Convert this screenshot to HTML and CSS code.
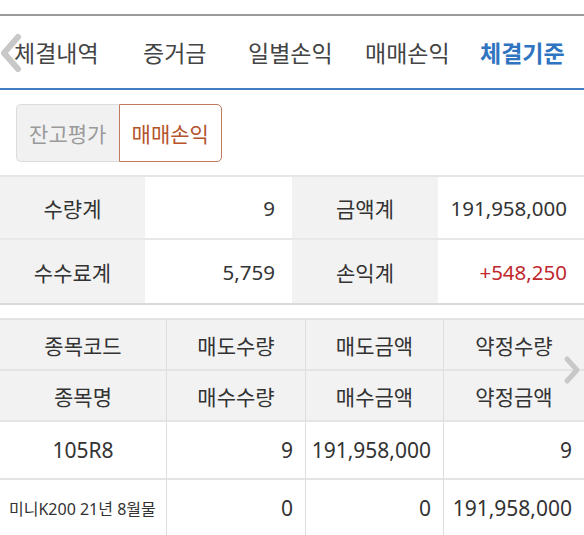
FILE: index.html
```html
<!DOCTYPE html>
<html lang="ko">
<head>
<meta charset="utf-8">
<link rel="stylesheet" href="styles.css">
</head>
<body>
<div class="page">
  <div class="top-space"></div>
  <nav class="tabs">
    <svg class="chev-left" width="24" height="40" viewBox="0 0 24 40"><polyline points="19,4 5,20 19,36" fill="none" stroke="#c8c8c8" stroke-width="6" stroke-linecap="round" stroke-linejoin="round"/></svg>
    <div class="tab t1">체결내역</div>
    <div class="tab t2">증거금</div>
    <div class="tab t3">일별손익</div>
    <div class="tab t4">매매손익</div>
    <div class="tab t5 active">체결기준</div>
  </nav>
  <div class="seg">
    <div class="seg-btn off">잔고평가</div>
    <div class="seg-btn on">매매손익</div>
  </div>
  <div class="summary">
    <div class="s-label">수량계</div>
    <div class="s-val">9</div>
    <div class="s-label">금액계</div>
    <div class="s-val">191,958,000</div>
    <div class="s-label">수수료계</div>
    <div class="s-val">5,759</div>
    <div class="s-label">손익계</div>
    <div class="s-val red">+548,250</div>
  </div>
  <div class="grid-wrap">
    <div class="grid">
      <div class="h">종목코드</div>
      <div class="h">매도수량</div>
      <div class="h">매도금액</div>
      <div class="h">약정수량</div>
      <div class="h">종목명</div>
      <div class="h">매수수량</div>
      <div class="h">매수금액</div>
      <div class="h">약정금액</div>
      <div class="d c">105R8</div>
      <div class="d">9</div>
      <div class="d">191,958,000</div>
      <div class="d">9</div>
      <div class="d name">미니K200 21년 8월물</div>
      <div class="d">0</div>
      <div class="d">0</div>
      <div class="d">191,958,000</div>
    </div>
    <svg class="chev-right" width="20" height="30" viewBox="0 0 20 30"><polyline points="5,4 15,15 5,26" fill="none" stroke="#c8c8c8" stroke-width="5" stroke-linecap="round" stroke-linejoin="round"/></svg>
  </div>
</div>
</body>
</html>
```

FILE: styles.css
```css
* { box-sizing: border-box; }
html, body { margin: 0; padding: 0; background: #fff; }
body {
  font-family: "Noto Sans", "Noto Sans CJK KR", sans-serif;
  color: #333;
  width: 584px;
  height: 535px;
  overflow: hidden;
}
.top-space { height: 16px; border-bottom: 2px solid #9a9a9a; }
.tabs {
  position: relative;
  display: grid;
  grid-template-columns: 130px 105px 117px 115px 117px;
  height: 74px;
  border-bottom: 2px solid #3f7cc0;
}
.tab {
  display: flex;
  align-items: center;
  padding-left: 13px;
  font-size: 23px;
  color: #444;
  white-space: nowrap;
}
.tab.t1 { padding-left: 14px; }
.tab.active {
  color: #2f74c0;
  font-weight: 700;
  border-bottom: 2px solid #3f7cc0;
  margin-bottom: -2px;
}
.chev-left { position: absolute; left: -1px; top: 17px; }
.seg {
  display: flex;
  margin: 14px 0 0 16px;
  width: 206px;
  height: 58px;
}
.seg-btn {
  flex: 1;
  display: flex;
  align-items: center;
  justify-content: center;
  font-size: 21px;
}
.seg-btn.off {
  background: #f1f1f1;
  color: #9a9a9a;
  border: 1px solid #dcdcdc;
  border-right: none;
  border-radius: 5px 0 0 5px;
}
.seg-btn.on {
  background: #fff;
  color: #b4532c;
  border: 1px solid #c07a5c;
  border-radius: 0 5px 5px 0;
}
.summary {
  margin-top: 13px;
  display: grid;
  grid-template-columns: 145px 147px 146px 146px;
  grid-auto-rows: 63px;
  border-top: 2px solid #e6e6e6;
  border-bottom: 2px solid #dadada;
}
.summary > div {
  display: flex;
  align-items: center;
  font-size: 20.5px;
}
.summary > .s-label { font-size: 21px; }
.summary > div:nth-child(-n+4) { border-bottom: 2px solid #e8e8e8; }
.s-label { background: #f2f2f2; justify-content: center; }
.s-val { justify-content: flex-end; padding-right: 17px; }
.s-val.red { color: #c0282d; }
.grid-wrap { position: relative; margin-top: 13px; }
.grid {
  display: grid;
  grid-template-columns: 167px 139px 138px 140px;
  grid-template-rows: 51px 51px 58px 58px;
  border-top: 2px solid #e2e2e2;
}
.grid > div {
  display: flex;
  align-items: center;
  border-right: 1px solid #dedede;
  border-bottom: 2px solid #e4e4e4;
  font-size: 21px;
  white-space: nowrap;
}
.grid > div:nth-child(4n) { border-right: none; }
.h { background: #f2f2f2; justify-content: center; }
.d { justify-content: flex-end; padding-right: 12px; font-size: 22px; }
.d.c { justify-content: center; padding-right: 0; }
.d.name { justify-content: flex-start; padding-left: 9px; font-size: 16px; }
.chev-right { position: absolute; right: 2px; top: 37px; }
```
